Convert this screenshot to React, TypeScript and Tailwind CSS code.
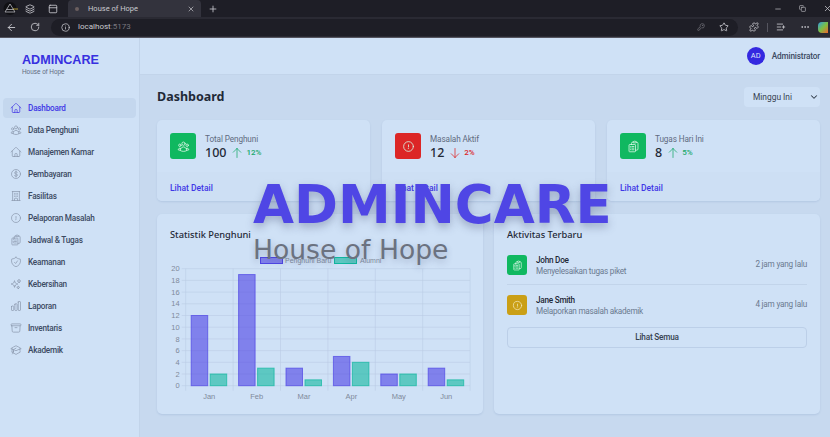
import React from "react";
import {
  HiOutlineHome, HiOutlineUserGroup, HiOutlineCurrencyDollar, HiOutlineBuildingOffice,
  HiOutlineExclamationCircle, HiOutlineClipboardDocumentList, HiOutlineShieldCheck,
  HiOutlineSparkles, HiOutlineChartBar, HiOutlineArchiveBox, HiOutlineAcademicCap,
  HiOutlineArrowUp, HiOutlineArrowDown, HiChevronDown,
} from "react-icons/hi2";
import { ArrowLeft, RotateCw, Info, X, Plus, Minus, Copy, KeyRound, Star, Puzzle, MoreHorizontal, PanelTop, Layers, ListPlus } from "lucide-react";

const nav = [
  ["Dashboard", HiOutlineHome],
  ["Data Penghuni", HiOutlineUserGroup],
  ["Manajemen Kamar", HiOutlineHome],
  ["Pembayaran", HiOutlineCurrencyDollar],
  ["Fasilitas", HiOutlineBuildingOffice],
  ["Pelaporan Masalah", HiOutlineExclamationCircle],
  ["Jadwal & Tugas", HiOutlineClipboardDocumentList],
  ["Keamanan", HiOutlineShieldCheck],
  ["Kebersihan", HiOutlineSparkles],
  ["Laporan", HiOutlineChartBar],
  ["Inventaris", HiOutlineArchiveBox],
  ["Akademik", HiOutlineAcademicCap],
] as const;

const stats = [
  { t: "Total Penghuni", v: "100", p: "12%", up: true, bg: "bg-[#10b860]", I: HiOutlineUserGroup },
  { t: "Masalah Aktif", v: "12", p: "2%", up: false, bg: "bg-[#dc2626]", I: HiOutlineExclamationCircle },
  { t: "Tugas Hari Ini", v: "8", p: "5%", up: true, bg: "bg-[#10b860]", I: HiOutlineClipboardDocumentList },
];

const months = ["Jan", "Feb", "Mar", "Apr", "May", "Jun"];
const a = [12, 19, 3, 5, 2, 3];
const b = [2, 3, 1, 4, 2, 1];

function Chart() {
  const x0 = 28.7, top = 54.7, bot = 171.7, step = 47.4;
  const y = (v: number) => bot - (v / 20) * (bot - top);
  const font = "'Liberation Sans', sans-serif";
  return (
    <svg width="326" height="200" className="absolute left-0 top-0">
      {Array.from({ length: 11 }, (_, i) => (
        <line key={i} x1={x0 - 4} x2="313" y1={y(i * 2)} y2={y(i * 2)} stroke="#b9cbe3" strokeOpacity="0.55" />
      ))}
      {Array.from({ length: 7 }, (_, i) => (
        <line key={i} x1={x0 + i * step} x2={x0 + i * step} y1={top} y2={bot + 5} stroke="#b9cbe3" strokeOpacity="0.55" />
      ))}
      {Array.from({ length: 11 }, (_, i) => (
        <text key={i} x={x0 - 6} y={y(i * 2) + 2.6} textAnchor="end" fontSize="7.5" fontFamily={font} fill="#7f8a9b">{i * 2}</text>
      ))}
      {months.map((m, i) => (
        <g key={m}>
          <rect x={x0 + 5.5 + i * step} y={y(a[i])} width="16.5" height={bot - y(a[i])} fill="#4f46e5" fillOpacity="0.62" stroke="#4f46e5" strokeOpacity="0.7" />
          <rect x={x0 + 24.5 + i * step} y={y(b[i])} width="16.5" height={bot - y(b[i])} fill="#10b8a0" fillOpacity="0.6" stroke="#10b8a0" strokeOpacity="0.7" />
          <text x={x0 + 23.5 + i * step} y="184.5" textAnchor="middle" fontSize="7.5" fontFamily={font} fill="#7f8a9b">{m}</text>
        </g>
      ))}
      <rect x="103.5" y="43.5" width="22" height="6" fill="#4f46e5" fillOpacity="0.62" stroke="#4f46e5" />
      <text x="128" y="49" fontSize="7" fontFamily={font} fill="#7f8a9b">Penghuni Baru</text>
      <rect x="177.5" y="43.5" width="22" height="6" fill="#10b8a0" fillOpacity="0.6" stroke="#10b8a0" />
      <text x="203" y="49" fontSize="7" fontFamily={font} fill="#7f8a9b">Alumni</text>
    </svg>
  );
}

export default function App() {
  return (
    <div className="relative flex h-[437px] w-[830px] flex-col overflow-hidden bg-[#c7d9ef] font-['Roboto',sans-serif]">
      {/* Browser chrome */}
      <div className="flex h-[17px] items-center bg-[#1e1e26] text-[#c9c9cf]">
        <div className="flex w-[68px] items-center pl-[3px]">
          <svg width="15" height="13" viewBox="0 0 15 13" className="shrink-0">
            <circle cx="7" cy="6.5" r="6.5" fill="#101014" />
            <path d="M7 2 L12 10 H2 Z M3.5 7.5 H11" fill="none" stroke="#b9b9bf" strokeWidth="0.8" />
            <path d="M10 7 H15" stroke="#d4b93a" strokeWidth="0.8" />
          </svg>
          <Layers size={10} className="ml-[7px]" />
          <PanelTop size={10} className="ml-[13px]" />
        </div>
        <div className="flex h-full w-[133px] items-center rounded-t-[4px] bg-[#33333d] pl-[7px] pr-[6px] text-[7.5px]">
          <span className="mr-[9px] h-[4px] w-[4px] rounded-full bg-[#6b5f5f]" />
          <span className="flex-1">House of Hope</span>
          <X size={8} />
        </div>
        <Plus size={10} className="ml-[7px]" />
        <div className="ml-auto flex items-center gap-[17px]">
          <Minus size={8} />
          <Copy size={7} />
          <X size={9} className="-mr-[2px]" />
        </div>
      </div>
      <div className="flex h-[21px] items-center border-b border-[#55555f] bg-[#2a2a33] text-[#c9c9cf]">
        <ArrowLeft size={11} className="ml-[6px]" />
        <RotateCw size={10} className="ml-[13px]" />
        <div className="ml-[11px] flex h-[17px] w-[687px] shrink-0 items-center rounded-full bg-[#1e1e26] pl-[10px] pr-[9px] text-[8px]">
          <Info size={9} />
          <span className="ml-[8px]">localhost</span>
          <span className="text-[#77777f]">:5173</span>
          <KeyRound size={8} className="ml-auto text-[#77777f]" />
          <Star size={10} className="ml-[14px]" />
        </div>
        <Puzzle size={10} className="ml-[11px] shrink-0" />
        <div className="ml-[8px] h-[9px] w-px shrink-0 bg-[#55555f]" />
        <ListPlus size={10} className="ml-[8px] shrink-0" />
        <MoreHorizontal size={10} className="ml-[14px] shrink-0" />
        <div className="ml-[8px] h-[11px] w-[10px] shrink-0 rounded-l-[4px] bg-[linear-gradient(135deg,#2f9be8,#7bc043_50%,#f0642c)]" />
      </div>

      {/* App */}
      <div className="flex min-h-0 flex-1">
        <aside className="flex w-[140px] shrink-0 flex-col border-r border-[#c2d4ea] bg-[#cfe1f6]">
          <div className="h-[60px] pl-[22px] pt-[16px] font-['Liberation_Sans',sans-serif]">
            <div className="text-[12.6px] font-bold leading-[13px] text-[#3730e0]">ADMINCARE</div>
            <div className="text-[6.4px] leading-[9px] text-[#5f6b80]">House of Hope</div>
          </div>
          <nav className="flex flex-col gap-[2px] px-[3px]">
            {nav.map(([label, Icon], i) => (
              <div key={label} className={`flex h-[20px] items-center rounded-[4px] pl-[7px] text-[8.2px] font-medium tracking-[-0.22px] ${i === 0 ? "bg-[#c4d7ee] text-[#3f37e6]" : "text-[#3c4a62]"}`}>
                <Icon className={`h-[12px] w-[12px] ${i === 0 ? "text-[#4f46e5]" : "text-[#8d9bb0]"}`} />
                <span className="ml-[6px]">{label}</span>
              </div>
            ))}
          </nav>
        </aside>

        <div className="flex min-w-0 flex-1 flex-col">
          <header className="flex h-[37px] shrink-0 items-center justify-end border-b border-[#c2d4ea] bg-[#cfe1f6] pr-[10px]">
            <div className="flex h-[18px] w-[18px] items-center justify-center rounded-full bg-[#3428e0] text-[7.5px] text-[#dfe3fb]">AD</div>
            <span className="ml-[7px] text-[8.2px] font-medium tracking-[-0.15px] text-[#3c4a62]">Administrator</span>
          </header>

          <main className="flex flex-1 flex-col pl-[17px] pr-[10px] pt-[12px]">
            <div className="flex h-[20px] items-center justify-between">
              <h1 className="font-['Noto_Sans',sans-serif] text-[12.5px] font-bold text-[#1f2937]">Dashboard</h1>
              <div className="flex h-[20px] w-[76px] items-center justify-between rounded-[4px] bg-[#cfe1f6] pl-[9px] pr-[2px] text-[8.4px] text-[#374151]">
                Minggu Ini
                <HiChevronDown className="h-[8px] w-[8px] text-[#1f2937]" strokeWidth={1} />
              </div>
            </div>

            <div className="mt-[13px] grid h-[81px] grid-cols-3 gap-[12px]">
              {stats.map(({ t, v, p, up, bg, I }) => {
                const Arrow = up ? HiOutlineArrowUp : HiOutlineArrowDown;
                return (
                  <div key={t} className="flex flex-col rounded-[5px] bg-[#cfe1f6] shadow-[0_1px_2px_rgba(90,120,170,0.18)]">
                    <div className="flex h-[52px] items-start px-[13px] pt-[13px]">
                      <div className={`flex h-[26px] w-[26px] items-center justify-center rounded-[3px] ${bg}`}>
                        <I className="h-[13px] w-[13px] text-[#d6f5e4]" />
                      </div>
                      <div className="ml-[9px]">
                        <div className="text-[8.2px] leading-[12px] tracking-[-0.1px] text-[#5f6b80]">{t}</div>
                        <div className="flex items-center">
                          <span className="font-['Noto_Sans',sans-serif] text-[12.5px] font-medium leading-[16px] text-[#1f2937]">{v}</span>
                          <Arrow className={`ml-[5px] h-[12px] w-[12px] ${up ? "text-[#18a96c]" : "text-[#dc2626]"}`} />
                          <span className={`ml-[3px] text-[8px] font-medium ${up ? "text-[#18a96c]" : "text-[#dc2626]"}`}>{p}</span>
                        </div>
                      </div>
                    </div>
                    <div className="flex flex-1 items-center rounded-b-[5px] bg-[#cddff4] px-[13px] pt-[3px] text-[8.5px] font-medium text-[#3f37e6]">Lihat Detail</div>
                  </div>
                );
              })}
            </div>

            <div className="mt-[13px] grid h-[200px] grid-cols-2 gap-[11px]">
              <section className="relative rounded-[5px] bg-[#cfe1f6] px-[13px] pt-[14px] shadow-[0_1px_2px_rgba(90,120,170,0.18)]">
                <h2 className="font-['Noto_Sans',sans-serif] text-[9.3px] font-medium leading-[14px] text-[#1f2937]">Statistik Penghuni</h2>
                <Chart />
              </section>
              <section className="rounded-[5px] bg-[#cfe1f6] px-[13px] pt-[14px] shadow-[0_1px_2px_rgba(90,120,170,0.18)]">
                <h2 className="font-['Noto_Sans',sans-serif] text-[9.3px] font-medium leading-[14px] text-[#1f2937]">Aktivitas Terbaru</h2>
                <div className="mt-[13px] flex h-[30px] items-start border-b border-[#c2d4ea]">
                  <div className="flex h-[20px] w-[20px] items-center justify-center rounded-[3px] bg-[#10b860]">
                    <HiOutlineClipboardDocumentList className="h-[11px] w-[11px] text-[#d6f5e4]" />
                  </div>
                  <div className="ml-[9px] flex-1 tracking-[-0.25px]">
                    <div className="text-[8.2px] font-medium leading-[11px] text-[#1f2937]">John Doe</div>
                    <div className="text-[8.2px] leading-[11px] text-[#6b7a90]">Menyelesaikan tugas piket</div>
                  </div>
                  <span className="pt-[3px] text-[8.2px] leading-[12px] tracking-[-0.2px] text-[#6b7a90]">2 jam yang lalu</span>
                </div>
                <div className="mt-[10px] flex h-[20px] items-start">
                  <div className="flex h-[20px] w-[20px] items-center justify-center rounded-[3px] bg-[#ca9f16]">
                    <HiOutlineExclamationCircle className="h-[11px] w-[11px] text-[#f5ecc4]" />
                  </div>
                  <div className="ml-[9px] flex-1 tracking-[-0.25px]">
                    <div className="text-[8.2px] font-medium leading-[11px] text-[#1f2937]">Jane Smith</div>
                    <div className="text-[8.2px] leading-[11px] text-[#6b7a90]">Melaporkan masalah akademik</div>
                  </div>
                  <span className="pt-[3px] text-[8.2px] leading-[12px] tracking-[-0.2px] text-[#6b7a90]">4 jam yang lalu</span>
                </div>
                <div className="mt-[12px] flex h-[21px] items-center justify-center rounded-[4px] border border-[#bccfe8] text-[8.2px] font-medium tracking-[-0.2px] text-[#374151]">Lihat Semua</div>
              </section>
            </div>
          </main>
        </div>
      </div>

      {/* Watermark */}
      <div className="pointer-events-none absolute left-[253px] top-[171px] font-['DejaVu_Sans',sans-serif]">
        <div className="text-[53px] font-bold leading-[68px] text-[#4f46e5] [text-shadow:0_4px_8px_rgba(60,70,110,0.35)]">ADMINCARE</div>
        <div className="-mt-[6px] text-[26.6px] leading-[34px] text-[#6b7280] [text-shadow:0_3px_6px_rgba(60,70,110,0.3)]">House of Hope</div>
      </div>
    </div>
  );
}
